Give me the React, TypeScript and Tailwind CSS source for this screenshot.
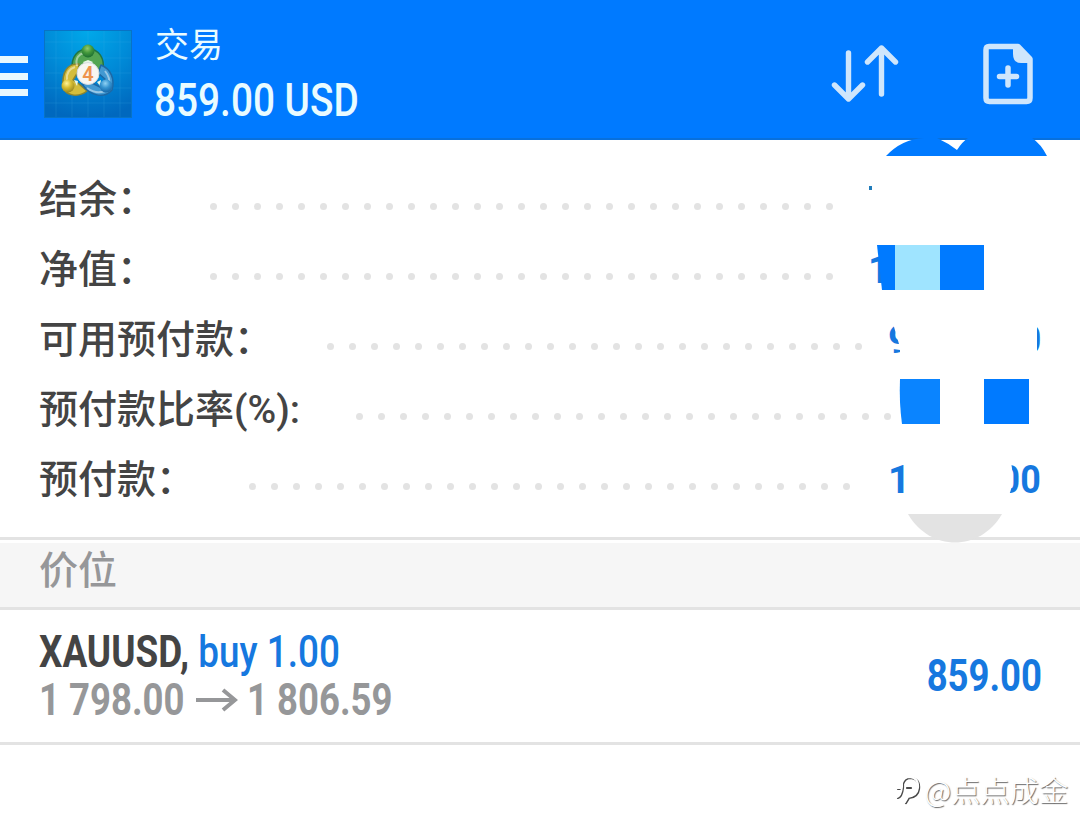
import React from 'react'

interface SummaryRow {
  label: string
  dots: number
  offset: string
  start?: string
  end?: string
  valueClass?: string
}

const rows: SummaryRow[] = [
  { label: '结余：', dots: 29, offset: 'ml-[210px]' },
  { label: '净值：', dots: 29, offset: 'ml-[210px]', start: '1', valueClass: 'left-[868px]' },
  { label: '可用预付款：', dots: 25, offset: 'ml-[327px]', start: '9', end: '0', valueClass: 'left-[888px]' },
  { label: '预付款比率(%):', dots: 25, offset: 'ml-[356px]' },
  { label: '预付款：', dots: 28, offset: 'ml-[249px]', start: '1', end: '00', valueClass: 'left-[888px]' },
]

function AppLogo() {
  return (
    <svg className="block h-[88px] w-[88px] shrink-0" viewBox="0 0 88 88">
      <defs>
        <radialGradient id="tile" cx="50%" cy="0%" r="100%">
          <stop offset="0" stopColor="#00a9ea" />
          <stop offset="0.5" stopColor="#008bd8" />
          <stop offset="1" stopColor="#0068be" />
        </radialGradient>
        <radialGradient id="green" cx="45%" cy="30%" r="70%">
          <stop offset="0" stopColor="#91c96e" />
          <stop offset="0.5" stopColor="#43983b" />
          <stop offset="1" stopColor="#1c6d32" />
        </radialGradient>
        <radialGradient id="yellow" cx="40%" cy="30%" r="70%">
          <stop offset="0" stopColor="#fff49a" />
          <stop offset="0.5" stopColor="#d7bd31" />
          <stop offset="1" stopColor="#9b8a22" />
        </radialGradient>
        <radialGradient id="blue" cx="45%" cy="30%" r="70%">
          <stop offset="0" stopColor="#8fd2f4" />
          <stop offset="0.5" stopColor="#3694d0" />
          <stop offset="1" stopColor="#1667a8" />
        </radialGradient>
      </defs>
      <rect width="88" height="88" fill="url(#tile)" />
      <path d="M12 0V88M28 0V88M44 0V88M60 0V88M76 0V88M0 12H88M0 28H88M0 43H88M0 58H88M0 73H88" stroke="#48b9ed" strokeOpacity=".18" />
      <rect x=".5" y=".5" width="87" height="87" fill="none" stroke="#0873c5" />
      <g strokeLinejoin="round">
        <path d="M28 40C27 26 34 19 44 19C55 19 61 28 59 41L53 47L47 34H40L34 42Z" fill="#54a552" stroke="#207546" strokeWidth="1.5" />
        <path d="M35 34C23 33 18 43 19 56C21 66 34 68 43 61L35 54L29 50L34 42Z" fill="#d3bd3c" stroke="#8d852e" strokeWidth="1.5" />
        <path d="M57 35C67 39 71 49 68 60C60 69 46 66 38 54L48 53L56 57L61 49L54 43Z" fill="#4299d2" stroke="#1d68a5" strokeWidth="1.5" />
      </g>
      <path d="M33 36C31 28 35 24 40 23M23 50C22 43 25 39 31 37M61 41C65 46 66 51 65 55M43 58C50 63 56 63 61 61" stroke="#fff" strokeOpacity=".45" strokeWidth="2" fill="none" />
      <path d="M39 32L44 30L49 32L46 35H41ZM30 50L34 51L33 56ZM53 52L57 50L56 56Z" fill="#e6f6e8" />
      <circle cx="44" cy="21" r="6.5" fill="url(#green)" />
      <circle cx="24" cy="56" r="6.5" fill="url(#yellow)" />
      <circle cx="62" cy="56" r="6.5" fill="url(#blue)" />
      <circle cx="44" cy="43.5" r="11" fill="#f8f6f2" stroke="#d5dce0" />
      <text x="44" y="50.5" textAnchor="middle" fill="#ee944c" fontFamily="Roboto, sans-serif" fontSize="20" fontWeight="600">4</text>
    </svg>
  )
}

function Header() {
  return (
    <header className="flex h-[140px] border-b-2 border-[#0870dc] bg-[#007aff] text-[#e9fbff]">
      <div className="mt-14 flex h-10 w-7 shrink-0 flex-col justify-between">
        <div className="h-[7px] bg-[#e8f8ff]" />
        <div className="h-[7px] bg-[#e8f8ff]" />
        <div className="h-[7px] bg-[#e8f8ff]" />
      </div>
      <div className="ml-4 mt-[30px]">
        <AppLogo />
      </div>
      <div className="ml-[22px] mt-5">
        <div className="h-[50px] pl-px text-[34px] leading-[50px]">交易</div>
        <div className="mt-[3px] w-[300px] origin-left scale-x-[0.843] whitespace-nowrap text-[46px] font-medium leading-[54px]">859.00 USD</div>
      </div>
      <svg className="ml-auto mr-[84px] mt-[43px] h-[62px] w-[68px]" viewBox="0 0 68 62" fill="none" stroke="#cfe6fc" strokeWidth="5.4" strokeLinecap="round" strokeLinejoin="round">
        <path d="M17.5 10V56M3.5 42L17.5 56L31.5 42M50.5 51V5M36.5 19L50.5 5L64.5 19" />
      </svg>
      <svg className="mr-[46px] mt-[43px] h-[62px] w-[51px]" viewBox="0 0 51 62" fill="none">
        <path d="M6 3.5H35L47 16V55Q47 58.5 43.5 58.5H6.5Q3 58.5 3 55V7Q3 3.5 6 3.5Z" stroke="#cfe6fc" strokeWidth="5.5" strokeLinejoin="round" />
        <path d="M30 3H35L47 16V20H38Q30 20 30 11Z" fill="#cfe6fc" />
        <path d="M25 25V42M16.5 33.5H33.5" stroke="#cfe6fc" strokeWidth="5.5" strokeLinecap="round" />
      </svg>
    </header>
  )
}

function Summary() {
  return (
    <section className="relative h-[397px] pt-6">
      {rows.map((row) => (
        <div key={row.label} className="relative h-[70px]">
          <div className="absolute left-[39px] top-[1px] whitespace-nowrap text-[39px] font-medium leading-[70px] text-[#444]">{row.label}</div>
          <div className={`flex h-[70px] items-center gap-[15px] pt-[14px] ${row.offset}`}>
            {Array.from({ length: row.dots }, (_, i) => (
              <span key={i} className="h-[7px] w-[7px] shrink-0 rounded-full bg-[#e3e3e3]" />
            ))}
          </div>
          {row.start && (
            <div className={`absolute top-[1px] w-[153px] text-[39px] font-bold leading-[70px] text-[#1678df] ${row.valueClass}`}>
              <span>{row.start}</span>
              <span className="absolute right-0 origin-right scale-x-[0.92]">{row.end}</span>
            </div>
          )}
        </div>
      ))}
      <svg className="pointer-events-none absolute left-[860px] top-[-2px] h-[408px] w-[200px]" viewBox="860 138 200 408">
        <path d="M886 156Q902 139 924 138H937Q948 143 957 150Q962 142 968 138H1032Q1041 144 1047 156Z" fill="#007aff" />
        <rect x="869" y="186" width="3" height="4" fill="#207cbb" />
        <path d="M880 250H900V290H883Z" fill="white" />
        <path d="M877 245H895V290H882Z" fill="#007aff" />
        <rect x="895" y="245" width="45" height="45" fill="#9fe4ff" />
        <rect x="940" y="245" width="44" height="45" fill="#007aff" />
        <path d="M892 320L899 344L886 343V348L900 350V360H1037V320Z" fill="white" />
        <path d="M900 379H940V424H902Q899 402 900 379Z" fill="#0a84ff" />
        <rect x="984" y="379" width="45" height="45" fill="#007aff" />
        <path d="M904 455H1009Q1017 480 1007 500H904Z" fill="white" />
        <path d="M908 514H1002C980 552 930 552 908 514Z" fill="#e3e3e3" />
      </svg>
    </section>
  )
}

function Position() {
  return (
    <section className="flex h-[135px] items-center justify-between border-b-[3px] border-[#e3e3e3] pl-[39px] pr-[38px]">
      <div className="font-bold">
        <div className="h-12 w-[400px] origin-left scale-x-[0.838] whitespace-nowrap text-[44px] leading-[48px] text-[#444]">
          XAUUSD, <span className="font-medium text-[#1678df]">buy 1.00</span>
        </div>
        <div className="flex h-12 items-center text-[44px] leading-[48px] text-[#969799]">
          <span className="w-[156px] origin-left scale-x-[0.83] whitespace-nowrap">1 798.00</span>
          <svg className="h-6 w-[43px]" viewBox="0 0 43 24" fill="none" stroke="currentColor" strokeWidth="4">
            <path d="M1 12H40M28 2L40 12L28 22" />
          </svg>
          <span className="ml-[9px] origin-left scale-x-[0.83] whitespace-nowrap">1 806.59</span>
        </div>
      </div>
      <div className="origin-right scale-x-[0.83] text-[44px] font-bold leading-[48px] text-[#1678df]">859.00</div>
    </section>
  )
}

function Watermark() {
  return (
    <footer className="flex h-[87px] items-center justify-end pr-3 text-white">
      <svg className="mr-1 mt-[3px] h-8 w-[27px]" viewBox="0 0 27 32" fill="none" strokeLinecap="round">
        <path d="M3 24Q7 23 8 14V10Q10 4 16 4Q25 5 24 15Q23 23 14 24L11 29M3 15H8M12 14H16" stroke="#4a4a4a" strokeWidth="2.2" />
        <path d="M2 23Q6 22 7 13V9Q9 3 15 3Q24 4 23 14Q22 22 13 23L10 28M2 14H7" stroke="white" strokeWidth="2" />
      </svg>
      <span className="inline-block origin-right scale-x-[1.01] font-['Noto_Sans_CJK_SC',sans-serif] text-[29px] font-light leading-[40px] [text-shadow:1px_1px_1px_#666]">@点点成金</span>
    </footer>
  )
}

export default function App() {
  return (
    <main className="h-[838px] w-[1080px] overflow-hidden bg-white font-[Roboto,'Noto_Sans_CJK_SC',sans-serif]">
      <Header />
      <Summary />
      <div className="h-[73px] border-y-[3px] border-[#e3e3e3] bg-white pt-[3px]">
        <div className="h-16 bg-[#f6f6f6] pl-[39px] text-[39px] font-medium leading-[57px] text-[#969799]">价位</div>
      </div>
      <Position />
      <Watermark />
    </main>
  )
}
